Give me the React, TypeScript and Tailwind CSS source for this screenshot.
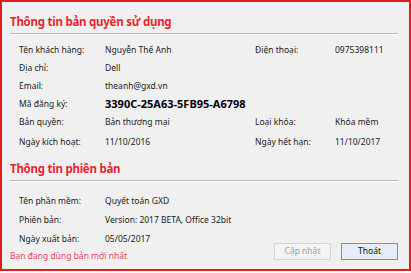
const font = { fontFamily: '"Noto Sans", "Liberation Sans", sans-serif' };

const Row = ({ label, value, rLabel, rValue }: { label: string; value: string; rLabel?: string; rValue?: string }) => (
  <div className="grid grid-cols-[86px_150px_80px_1fr] h-[18px] items-center">
    <span>{label}</span>
    <span>{value}</span>
    <span>{rLabel}</span>
    <span>{rValue}</span>
  </div>
);

export default function App() {
  return (
    <div className="w-[411px] h-[273px] bg-white text-[8.5px] text-[#222]" style={font}>
      <div className="h-[271px] border-2 border-[#e31b1b] bg-[#f0f0f0] px-[8px] pt-[11px]">
        {/* Thông tin bản quyền */}
        <h2 className="text-[11.5px] leading-[18px] font-bold text-[#e8262d] tracking-[-0.25px]">
          Thông tin bản quyền sử dụng
        </h2>
        <div className="mt-[2px] mr-[3px] border-t border-[#b9b9b9] border-b border-b-white" />
        <div className="pl-[9px] mt-[6px]">
          <Row label="Tên khách hàng:" value="Nguyễn Thế Anh" rLabel="Điện thoại:" rValue="0975398111" />
          <Row label="Địa chỉ:" value="Dell" />
          <Row label="Email:" value="theanh@gxd.vn" />
          <div className="grid grid-cols-[86px_1fr] h-[18px] items-center">
            <span>Mã đăng ký:</span>
            <span className="text-[11px] font-bold text-black">3390C-25A63-5FB95-A6798</span>
          </div>
          <Row label="Bản quyền:" value="Bản thương mại" rLabel="Loại khóa:" rValue="Khóa mềm" />
          <div className="h-[2px]" />
          <Row label="Ngày kích hoạt:" value="11/10/2016" rLabel="Ngày hết hạn:" rValue="11/10/2017" />
        </div>

        {/* Thông tin phiên bản */}
        <h2 className="mt-[9px] text-[11.5px] leading-[18px] font-bold text-[#e8262d] tracking-[-0.25px]">
          Thông tin phiên bản
        </h2>
        <div className="mt-[2px] mr-[3px] border-t border-[#b9b9b9] border-b border-b-white" />
        <div className="flex items-end justify-between mt-[10px]">
          <div>
            <div className="pl-[9px]">
              <div className="grid grid-cols-[86px_1fr] h-[19px] items-center">
                <span>Tên phần mềm:</span>
                <span>Quyết toán GXD</span>
              </div>
              <div className="grid grid-cols-[86px_1fr] h-[19px] items-center">
                <span>Phiên bản:</span>
                <span>Version: 2017 BETA, Office 32bit</span>
              </div>
              <div className="grid grid-cols-[86px_1fr] h-[19px] items-center">
                <span>Ngày xuất bản:</span>
                <span>05/05/2017</span>
              </div>
            </div>
            <div className="h-[15px] flex items-center text-[#e8455a]">Bạn đang dùng bản mới nhất</div>
          </div>
          <div className="flex gap-[10px] mr-[3px] mb-[4px]">
            <button className="w-[57px] h-[17px] border border-[#d4d4d4] bg-[#f4f4f4] text-[#a0a0a0] text-[8.5px]">
              Cập nhật
            </button>
            <button className="w-[57px] h-[17px] border border-[#5b9bd5] bg-[#e5eef8] text-[#111] text-[8.5px]">
              Thoát
            </button>
          </div>
        </div>
      </div>
    </div>
  );
}
